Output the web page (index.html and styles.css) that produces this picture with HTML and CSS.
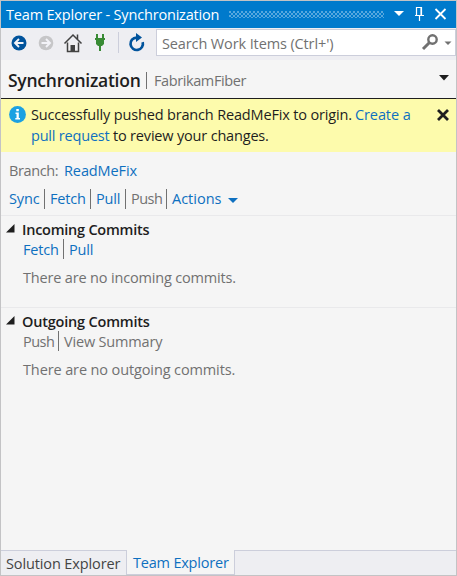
FILE: index.html
```html
<!DOCTYPE html>
<html lang="en">
<head>
<meta charset="utf-8">
<title>Team Explorer - Synchronization</title>
<link rel="stylesheet" href="styles.css">
</head>
<body>
<main class="panel">
  <header class="titlebar">
    <span class="t title">Team Explorer - Synchronization</span>
    <span class="grip"></span>
    <svg class="window-icons" width="68" height="27" viewBox="0 0 68 27" fill="none" stroke="#fff">
      <path d="M6 10h10l-5 5z" fill="#fff" stroke="none"/>
      <path d="M28.500 14.500V6.500h5v8M27 14.500h9M31.500 15v5M33 6v8" stroke-width="1.200"/>
      <path d="M47.500 8l10 10M57.500 8L47.500 18" stroke-width="1.800"/>
    </svg>
  </header>
  <nav class="toolbar">
    <svg class="tools" width="155" height="32" viewBox="0 0 155 32" fill="none">
      <circle cx="18" cy="15" r="7.500" fill="#00539c"/>
      <path d="M22.500 15H15M18 11l-4 4 4 4" stroke="#f3f3f8" stroke-width="1.900"/>
      <circle cx="45" cy="15" r="7.300" fill="#c6c6c8"/>
      <path d="M40.500 15H48M45 11l4 4-4 4" stroke="#f3f3f8" stroke-width="1.900"/>
      <path d="M66.500 14.500V23.500H77.500V14.500" fill="#f0eff1" stroke="#424242" stroke-width="1.500"/>
      <path d="M63.500 15.500L72 7l8.500 8.500M76.500 11V6.500" stroke="#424242" stroke-width="1.500"/>
      <path d="M69.500 17h4.500v6h-4.500z" fill="#424242"/>
      <path d="M95 6h2v4h4V6h2v4h1v2h-1v4l-2 2h-1v5h-2v-5h-1l-2-2v-4h-1v-2h1z" fill="#388a34"/>
      <path d="M117.500 4v21" stroke="#cccedb"/>
      <path d="M135.500 9.600A6.200 6.200 0 1 0 141.700 14.200" stroke="#00539c" stroke-width="2.700"/>
      <path d="M135 5l6 4.500-6 4.500z" fill="#00539c"/>
    </svg>
    <div class="search">
      <span class="t placeholder">Search Work Items (Ctrl+')</span>
      <svg width="34" height="25" viewBox="0 0 34 25" fill="none">
        <circle cx="11.500" cy="9.500" r="4.200" stroke="#717171" stroke-width="2.400"/>
        <path d="M8.500 12.500l-6.500 6.500" stroke="#717171" stroke-width="3"/>
        <path d="M23.500 11.500h7l-3.500 3.500z" fill="#717171"/>
      </svg>
    </div>
  </nav>
  <section class="page-head">
    <h1 class="t heading">Synchronization</h1>
    <span class="head-rule"></span>
    <span class="t project">FabrikamFiber</span>
    <svg width="10" height="6" viewBox="0 0 10 6"><path d="M0 0h10L5 5.500z" fill="#1e1e1e"/></svg>
  </section>
  <section class="notice">
    <svg class="info" width="17" height="17" viewBox="0 0 17 17"><circle cx="8.500" cy="8.500" r="8.400" fill="#1ba1e2"/><path d="M7.300 3h2.500v2.300H7.300zM6.500 6.500h3.300V12h1.200v1.500H6.300V12h1.200V8h-1z" fill="#fff"/></svg>
    <div class="message">
      <div class="line"><span class="t m1">Successfully pushed branch ReadMeFix to origin.</span><a class="t m2">Create a</a></div>
      <div class="line"><a class="t m3">pull request</a><span class="t m4">to review your changes.</span></div>
    </div>
    <svg class="dismiss" width="12" height="12" viewBox="0 0 12 12"><path d="M1 1l10 10M11 1L1 11" stroke="#1e1e1e" stroke-width="2.800"/></svg>
  </section>
  <section class="branch">
    <div class="line"><span class="t b1">Branch:</span><a class="t b2">ReadMeFix</a></div>
    <div class="line actions"><a class="t a1">Sync</a><i></i><a class="t a2">Fetch</a><i></i><a class="t a3">Pull</a><i></i><span class="t a4">Push</span><i></i><a class="t a5">Actions</a>
      <svg width="10" height="5" viewBox="0 0 10 5"><path d="M0 0h10L5 5z" fill="#0e70c0"/></svg></div>
  </section>
  <section class="commits">
    <h2><svg width="9" height="9" viewBox="0 0 9 9"><path d="M8.500 0v8.500H0z" fill="#1e1e1e"/></svg><span class="t c1">Incoming Commits</span></h2>
    <div class="line actions"><a class="t a2">Fetch</a><i></i><a class="t a3">Pull</a></div>
    <p class="t c2">There are no incoming commits.</p>
  </section>
  <section class="commits">
    <h2><svg width="9" height="9" viewBox="0 0 9 9"><path d="M8.500 0v8.500H0z" fill="#1e1e1e"/></svg><span class="t c3">Outgoing Commits</span></h2>
    <div class="line actions"><span class="t a4">Push</span><i></i><span class="t c4">View Summary</span></div>
    <p class="t c5">There are no outgoing commits.</p>
  </section>
  <footer class="tabs">
    <div class="tab"><span class="t s1">Solution Explorer</span></div>
    <div class="tab active"><span class="t s2">Team Explorer</span></div>
    <div class="rest"></div>
  </footer>
</main>
</body>
</html>
```
FILE: styles.css
```css
* { box-sizing: border-box; margin: 0; padding: 0; }
body { width: 457px; height: 576px; overflow: hidden; font: 14.5px/20px "Open Sans", "Noto Sans", sans-serif; color: #717171; }
.panel { display: flex; flex-direction: column; width: 457px; height: 576px; border: 1px solid #c3c3c5; background: #f5f5f5; }
.t { white-space: nowrap; flex: none; }
a { color: #0e70c0; }

.titlebar { display: flex; align-items: center; height: 27px; padding-left: 5px; background: #007acc; color: #fff; }
.title { width: 223px; letter-spacing: -0.18px; }
.grip { width: 155px; height: 7px; background: radial-gradient(circle at 1px 1px, #59a8de 0.7px, transparent 1px) 0 0 / 4px 4px, radial-gradient(circle at 1px 1px, #59a8de 0.7px, transparent 1px) 2px 2px / 4px 4px; }
.window-icons { margin-left: 4px; }

.toolbar { display: flex; height: 32px; background: #eeeef2; }
.search { display: flex; justify-content: space-between; width: 300px; height: 27px; margin-top: 1px; padding-left: 5px; border: 1px solid #cccedb; background: #fff; line-height: 27px; }
.placeholder { letter-spacing: -0.12px; }

.page-head { display: flex; align-items: center; height: 39px; padding: 2px 7px 0; border-bottom: 1px solid #1e1e1e; }
.heading { width: 138px; font-size: 17.5px; font-weight: 600; letter-spacing: -0.25px; color: #1e1e1e; }
.head-rule { width: 1px; height: 17px; margin-right: 7px; background: #717171; }
.project { padding-top: 1px; letter-spacing: -0.4px; }
.page-head svg { margin: 0 0 4px auto; }

.notice { display: flex; height: 53px; padding: 5px 7px 0 8px; background: #fdfbac; color: #1e1e1e; }
.info { margin-top: 2px; }
.message { flex: 1; margin-left: 5px; }
.line { display: flex; align-items: center; height: 21px; }
.m1 { width: 324px; letter-spacing: -0.16px; }
.m2 { letter-spacing: -0.1px; }
.m3 { width: 82px; letter-spacing: -0.2px; }
.m4 { letter-spacing: -0.18px; }
.dismiss { margin-top: 5px; }

.branch { height: 63px; padding: 8px; }
.b1 { width: 55px; letter-spacing: -0.4px; }
.b2 { letter-spacing: -0.1px; }
.actions i { width: 1px; height: 20px; margin-right: 5px; background: #717171; }
.branch .actions { margin-top: 7px; }
.actions svg { margin: 3px 0 0 7px; }
.a1 { width: 35px; letter-spacing: -0.1px; }
.a2 { width: 40px; letter-spacing: -0.2px; }
.a3 { width: 29px; letter-spacing: -0.2px; }
.a4 { width: 35px; letter-spacing: -0.5px; }

.commits { height: 92px; border-top: 1px solid #e9e9eb; padding: 3px 0 0 22px; }
h2 { display: flex; height: 20px; font-size: 14.5px; line-height: 22px; font-weight: 600; color: #1e1e1e; margin-left: -17px; }
h2 svg { margin: 5px 7px 0 0; }
.commits .actions { height: 20px; }
.commits .actions .t { padding-top: 2px; }
.commits p { margin-top: 9px; }
.c1 { letter-spacing: -0.24px; }
.c2 { letter-spacing: -0.17px; }
.c3 { letter-spacing: -0.2px; }
.c4 { letter-spacing: -0.18px; }
.c5 { letter-spacing: -0.12px; }

.tabs { display: flex; height: 25px; margin-top: auto; line-height: 25px; color: #444; }
.tab { width: 126px; padding-left: 5px; border: solid #cccedb; border-width: 1px 1px 0 0; background: #eeeef2; }
.active { width: 108px; padding-left: 6px; border-width: 0 1px 1px 0; background: #f5f5f5; color: #0e70c0; }
.rest { flex: 1; border-top: 1px solid #cccedb; background: #eeeef2; }
.s1 { letter-spacing: -0.12px; }
.s2 { letter-spacing: -0.2px; }
```
